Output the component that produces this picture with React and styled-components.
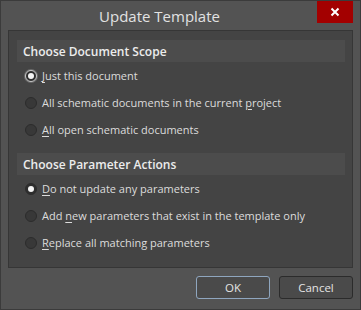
import React from "react";
import styled, { createGlobalStyle } from "styled-components";

const Global = createGlobalStyle`
  html, body { margin: 0; padding: 0; background: #535353; }
  body { font-family: "Open Sans", "Noto Sans", sans-serif; }
`;

const Window = styled.div`
  box-sizing: border-box;
  width: 361px;
  height: 310px;
  background: #535353;
  border: 1px solid #3b3b3b;
  display: flex;
  flex-direction: column;
`;

const TitleBar = styled.div`
  position: relative;
  height: 29px;
  display: flex;
  align-items: center;
  justify-content: center;
  padding-right: 42px;
`;

const Title = styled.div`
  font-family: "Open Sans", sans-serif;
  font-size: 15px;
  color: #e2e2e2;
  margin-top: 1px;
`;

const Close = styled.div`
  position: absolute;
  top: 0;
  right: 7px;
  width: 36px;
  height: 22px;
  background: #a30000;
  display: flex;
  align-items: center;
  justify-content: center;
`;

const Panel = styled.div`
  box-sizing: border-box;
  margin: 0 7px;
  height: 238px;
  background: #444444;
  border: 1px solid #363636;
  padding: 9px 7px 0 8px;
  display: flex;
  flex-direction: column;
`;

const Section = styled.div`
  display: flex;
  flex-direction: column;
  margin-bottom: ${(p) => p.$gap || 0}px;
`;

const Header = styled.div`
  height: 22px;
  background: #4c4c4c;
  display: flex;
  align-items: center;
  padding-left: 6px;
  font-size: 12px;
  font-weight: 600;
  color: #ececec;
`;

const Row = styled.label`
  height: 27px;
  display: flex;
  align-items: center;
  padding-left: 8px;
  font-size: 11px;
  color: #dcdcdc;
  gap: 5px;
`;

const Radio = styled.span`
  box-sizing: border-box;
  width: 12px;
  height: 12px;
  border-radius: 50%;
  background: ${(p) => (p.$checked ? "#2e2e2e" : "#383838")};
  border: 1px solid ${(p) => (p.$focus ? "#c8c8c8" : "#2c2c2c")};
  box-shadow: ${(p) => (p.$focus ? "0 0 0 1px #6b6b6b" : "none")};
  display: flex;
  align-items: center;
  justify-content: center;
  flex-shrink: 0;
  &::after {
    content: "";
    display: ${(p) => (p.$checked ? "block" : "none")};
    width: 6px;
    height: 6px;
    border-radius: 50%;
    background: #f4f4f4;
  }
`;

const U = styled.span`
  text-decoration: underline;
  text-underline-offset: 2px;
`;

const Footer = styled.div`
  flex: 1;
  display: flex;
  justify-content: flex-end;
  align-items: flex-start;
  padding: 8px 7px 0 0;
  gap: 9px;
`;

const Button = styled.button`
  box-sizing: border-box;
  width: 74px;
  height: 23px;
  border-radius: 3px;
  background: #4a4a4a;
  border: 1px solid ${(p) => (p.$default ? "#8fa6bf" : "#2b2b2b")};
  color: #e4e4e4;
  font-family: "Open Sans", sans-serif;
  font-size: 11.5px;
  padding: 0;
`;

const CloseIcon = () => (
  <svg width="10" height="10" viewBox="0 0 10 10">
    <path d="M1.5 1.5 L8.5 8.5 M8.5 1.5 L1.5 8.5" stroke="#fff" strokeWidth="2" />
  </svg>
);

const Option = ({ checked, focus, children }) => (
  <Row>
    <Radio $checked={checked} $focus={focus} />
    <span>{children}</span>
  </Row>
);

export default function App() {
  return (
    <>
      <Global />
      <Window>
        <TitleBar>
          <Title>Update Template</Title>
          <Close>
            <CloseIcon />
          </Close>
        </TitleBar>
        <Panel>
          <Section $gap={10}>
            <Header>Choose Document Scope</Header>
            <Option checked focus>
              <U>J</U>ust this document
            </Option>
            <Option>
              All schematic documents in the current <U>p</U>roject
            </Option>
            <Option>
              <U>A</U>ll open schematic documents
            </Option>
          </Section>
          <Section>
            <Header>Choose Parameter Actions</Header>
            <Option checked>
              <U>D</U>o not update any parameters
            </Option>
            <Option>
              Add <U>n</U>ew parameters that exist in the template only
            </Option>
            <Option>
              <U>R</U>eplace all matching parameters
            </Option>
          </Section>
        </Panel>
        <Footer>
          <Button $default>OK</Button>
          <Button>Cancel</Button>
        </Footer>
      </Window>
    </>
  );
}
